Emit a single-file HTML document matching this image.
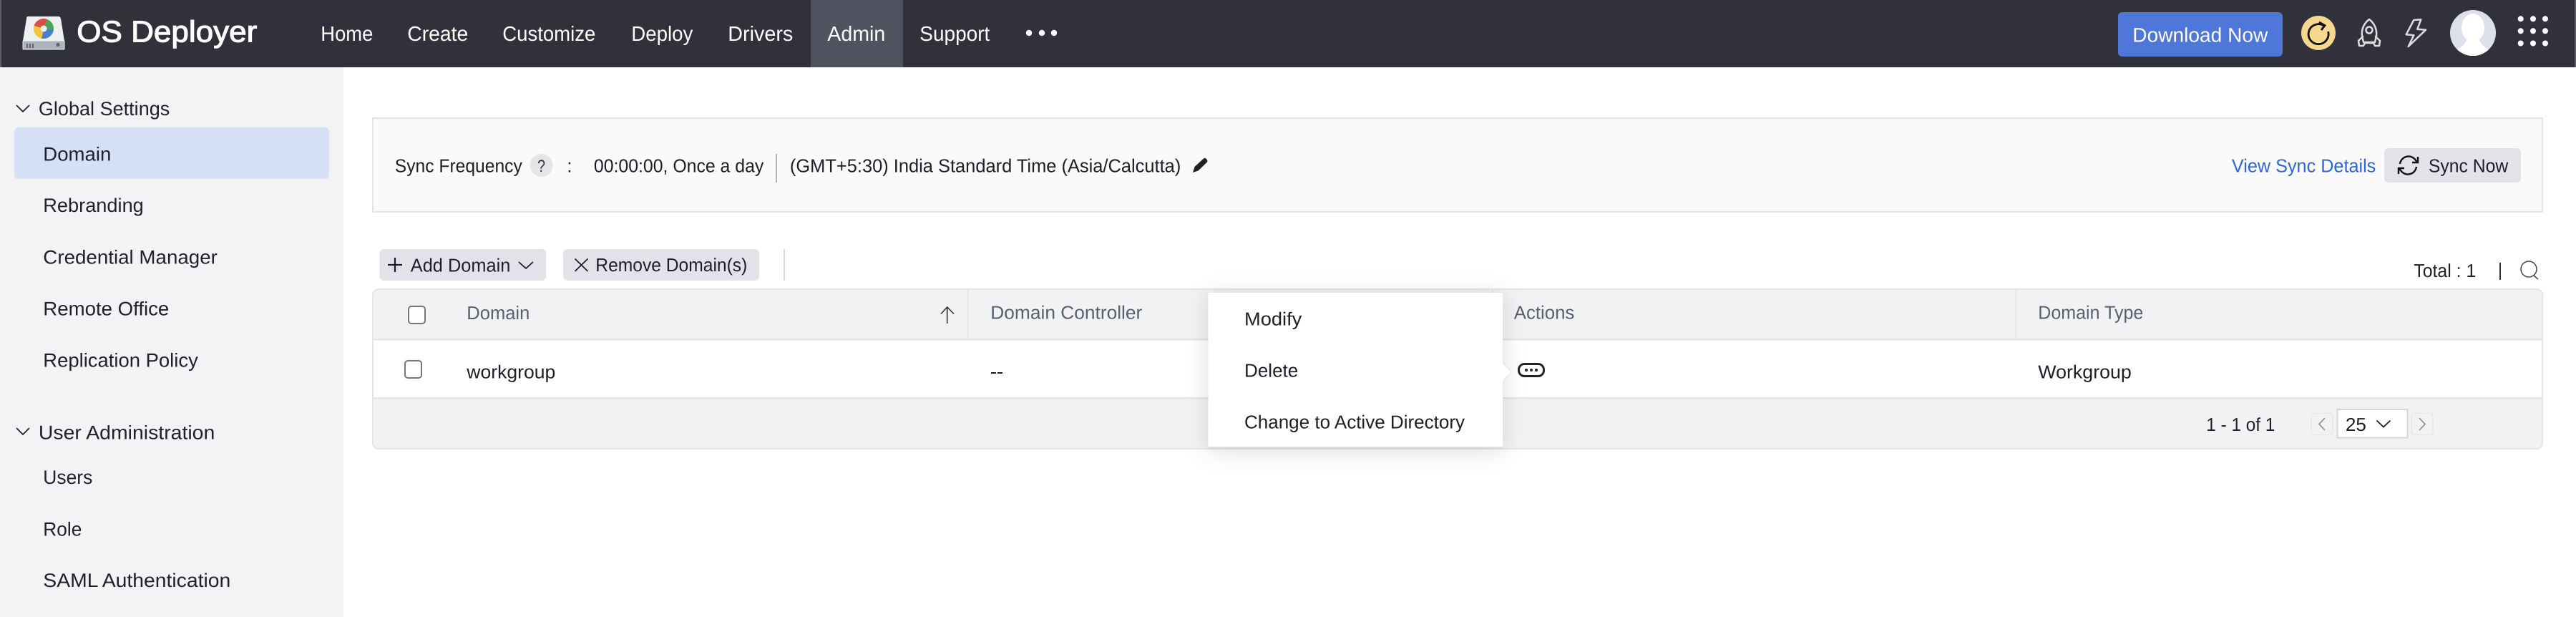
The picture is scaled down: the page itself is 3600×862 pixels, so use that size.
<!DOCTYPE html>
<html lang="en"><head><meta charset="utf-8"><title>OS Deployer</title>
<style>
html,body{margin:0;padding:0;background:#fff;width:3600px;height:862px;overflow:hidden}
svg{display:block}
text{font-family:"Liberation Sans",Arial,sans-serif;fill:#1d1e26;font-size:26px;text-rendering:geometricPrecision;transform:translateX(-.7px)}
.nav{fill:#fff;font-size:29px}
.side{font-size:27px;fill:#20212a}
.th{fill:#5b5e6e}
</style></head><body>
<svg xmlns="http://www.w3.org/2000/svg" width="3600" height="862" viewBox="0 0 3600 862">
<defs>
<filter id="sh" x="-20%" y="-25%" width="140%" height="150%"><feDropShadow dx="0" dy="4" stdDeviation="16" flood-color="#000" flood-opacity=".14"/></filter>
<clipPath id="tb"><rect x="520" y="403" width="3034" height="225" rx="9"/></clipPath>
<clipPath id="av"><circle cx="3456" cy="46" r="32"/></clipPath>
</defs>
<rect width="3600" height="862" fill="#fff"/>
<!-- header -->
<rect width="3600" height="94" fill="#31313b"/>
<rect width="2" height="94" fill="#5b5c66"/><rect x="3598" width="2" height="94" fill="#5b5c66"/>
<rect x="1133" width="129" height="94" fill="#50535f"/>
<!-- logo -->
<path d="M39 23H82Q84 23 85 26L90 57H32L37 26Q37 23 39 23Z" fill="#eef0f1"/>
<rect x="32" y="57" width="58" height="12" rx="1" fill="#adb3bb" stroke="#eef0f1" stroke-width="1"/>
<path d="M38 61v6M42 61v6M46 61v6" stroke="#5d6570" stroke-width="2"/><circle cx="81" cy="62.500" r="2.600" fill="#5d6570"/>
<path d="M61 40L47.500 36A14 14 0 0 1 66 27Z" fill="#d9503f"/>
<path d="M61 40L66 27A14 14 0 0 1 75 41Z" fill="#4ba55a"/>
<path d="M61 40L75 41A14 14 0 0 1 58 53.700Z" fill="#4a7fcb"/>
<path d="M61 40L58 53.700A14 14 0 0 1 47.500 36Z" fill="#f4c53d"/>
<circle cx="61" cy="40" r="4.500" fill="#eef0f1"/>
<text x="108" y="58.500" class="nav" style="font-size:42px;stroke:#fff;stroke-width:1.100" textLength="252" lengthAdjust="spacingAndGlyphs">OS Deployer</text>
<text x="449" y="57" class="nav" textLength="73" lengthAdjust="spacingAndGlyphs">Home</text>
<text x="570" y="57" class="nav" textLength="85" lengthAdjust="spacingAndGlyphs">Create</text>
<text x="703" y="57" class="nav" textLength="130" lengthAdjust="spacingAndGlyphs">Customize</text>
<text x="883" y="57" class="nav" textLength="86" lengthAdjust="spacingAndGlyphs">Deploy</text>
<text x="1018" y="57" class="nav" textLength="91" lengthAdjust="spacingAndGlyphs">Drivers</text>
<text x="1157" y="57" class="nav" textLength="81" lengthAdjust="spacingAndGlyphs">Admin</text>
<text x="1286" y="57" class="nav" textLength="98" lengthAdjust="spacingAndGlyphs">Support</text>
<g fill="#fff"><circle cx="1438" cy="46" r="4.200"/><circle cx="1456" cy="46" r="4.200"/><circle cx="1473" cy="46" r="4.200"/></g>
<rect x="2960" y="17" width="230" height="62" rx="6" fill="#4f77d9"/>
<text x="2981" y="58.500" class="nav" style="font-size:28px" textLength="189" lengthAdjust="spacingAndGlyphs">Download Now</text>
<circle cx="3240" cy="46" r="24" fill="#f5d78e"/>
<path d="M3247 35.500A14 14 0 1 0 3253.600 44" fill="none" stroke="#111" stroke-width="2.800"/>
<path d="M3241 31L3249 35.500L3244 42" fill="none" stroke="#111" stroke-width="2.800"/>
<g fill="none" stroke="#dcdde1" stroke-width="2.500" stroke-linejoin="round" stroke-linecap="round">
<path d="M3311 27C3303 33 3300 42 3301 50L3303 59H3319L3321 50C3322 42 3319 33 3311 27Z"/>
<circle cx="3311" cy="42" r="4.500"/>
<path d="M3302 51L3296 57L3297 64H3303L3305 60H3317L3319 64H3325L3326 57L3320 51"/>
<path d="M3383.300 27.300L3373.300 28L3362.700 48.300L3373.300 49.300L3365.700 65L3390 41.700L3378.300 40.700Z"/>
</g>
<circle cx="3456" cy="46" r="32" fill="#dde0e9"/>
<g clip-path="url(#av)" fill="#fff"><ellipse cx="3456" cy="39" rx="16" ry="20"/><path d="M3420 82C3428 68 3446 68 3448 52H3464C3466 68 3484 68 3492 82Z"/></g>
<g fill="#fff"><circle cx="3522.700" cy="26.300" r="4"/><circle cx="3540" cy="26.300" r="4"/><circle cx="3557" cy="26.300" r="4"/><circle cx="3522.700" cy="43.300" r="4"/><circle cx="3540" cy="43.300" r="4"/><circle cx="3557" cy="43.300" r="4"/><circle cx="3522.700" cy="60.500" r="4"/><circle cx="3540" cy="60.500" r="4"/><circle cx="3557" cy="60.500" r="4"/></g>
<!-- sidebar -->
<rect y="94" width="480" height="768" fill="#f2f3f5"/>
<rect x="20" y="178" width="440" height="72" rx="6" fill="#d5dff6"/>
<path d="M23 147L32 156L41 147M23 598L32 607L41 598" fill="none" stroke="#22232b" stroke-width="1.800"/>
<text x="54.600" y="161" class="side" textLength="183.400" lengthAdjust="spacingAndGlyphs">Global Settings</text>
<text x="61" y="224.500" class="side" textLength="95" lengthAdjust="spacingAndGlyphs">Domain</text>
<text x="61" y="296" class="side" textLength="140.500" lengthAdjust="spacingAndGlyphs">Rebranding</text>
<text x="61" y="368.500" class="side" textLength="243.600" lengthAdjust="spacingAndGlyphs">Credential Manager</text>
<text x="61" y="440.500" class="side" textLength="176" lengthAdjust="spacingAndGlyphs">Remote Office</text>
<text x="61" y="512.500" class="side" textLength="216.500" lengthAdjust="spacingAndGlyphs">Replication Policy</text>
<text x="54.600" y="613.500" class="side" textLength="246.400" lengthAdjust="spacingAndGlyphs">User Administration</text>
<text x="61" y="676" class="side" textLength="69" lengthAdjust="spacingAndGlyphs">Users</text>
<text x="61" y="748.500" class="side" textLength="54" lengthAdjust="spacingAndGlyphs">Role</text>
<text x="61" y="820" class="side" textLength="262" lengthAdjust="spacingAndGlyphs">SAML Authentication</text>
<!-- sync panel -->
<rect x="521" y="165" width="3032" height="131" fill="#fafafa" stroke="#e4e5ea" stroke-width="2"/>
<text x="552.500" y="240.500" textLength="178" lengthAdjust="spacingAndGlyphs">Sync Frequency</text>
<circle cx="756.600" cy="231" r="16" fill="#e4e5e9"/>
<text x="751.700" y="240" style="font-size:24px;fill:#333" textLength="11" lengthAdjust="spacingAndGlyphs">?</text>
<text x="793" y="240.500">:</text>
<text x="830.600" y="240.500" textLength="237.400" lengthAdjust="spacingAndGlyphs">00:00:00, Once a day</text>
<rect x="1084" y="215" width="2" height="40" fill="#b4b4ac"/>
<text x="1104.600" y="240.500" textLength="546.400" lengthAdjust="spacingAndGlyphs">(GMT+5:30) India Standard Time (Asia/Calcutta)</text>
<path d="M1667 241L1669.500 233L1682 221.500Q1684 220 1686 222L1687 223.500Q1688 225.500 1686.500 227L1674.500 238.500Z" fill="#222"/>
<text x="3119.600" y="240.500" style="fill:#2a66dc" textLength="201.400" lengthAdjust="spacingAndGlyphs">View Sync Details</text>
<rect x="3332" y="207" width="191" height="48" rx="6" fill="#e2e3e8"/>
<g fill="none" stroke="#111" stroke-width="2.400"><path d="M3354 229A12 12 0 0 1 3376 224L3378 226"/><path d="M3379 219V227H3371"/><path d="M3377 233A12 12 0 0 1 3355 238L3353 236"/><path d="M3352 243V235H3360"/></g>
<text x="3394.600" y="240.500" textLength="111.400" lengthAdjust="spacingAndGlyphs">Sync Now</text>
<!-- toolbar -->
<rect x="530.600" y="348" width="232.400" height="44" rx="6" fill="#e2e3e8"/>
<path d="M542 370H562M552 360V380" stroke="#1d1e26" stroke-width="2.200"/>
<text x="574.500" y="379.500" textLength="139.500" lengthAdjust="spacingAndGlyphs">Add Domain</text>
<path d="M725 366L735 375L745 366" fill="none" stroke="#1d1e26" stroke-width="1.800"/>
<rect x="787" y="348" width="274" height="44" rx="6" fill="#e2e3e8"/>
<path d="M803.500 361.500L821.500 379M821.500 361.500L803.500 379" stroke="#1d1e26" stroke-width="1.800"/>
<text x="833" y="379" textLength="212" lengthAdjust="spacingAndGlyphs">Remove Domain(s)</text>
<rect x="1095" y="348" width="2" height="44" fill="#d8d8da"/>
<text x="3374" y="387" textLength="87" lengthAdjust="spacingAndGlyphs">Total : 1</text>
<rect x="3493" y="367" width="2" height="24" fill="#333"/>
<circle cx="3534" cy="376" r="11" fill="none" stroke="#444" stroke-width="1.500"/><path d="M3541 385L3547 390" stroke="#444" stroke-width="1.500"/>
<!-- table -->
<g clip-path="url(#tb)">
<rect x="520" y="403" width="3034" height="71" fill="#f1f2f4"/>
<rect x="520" y="474" width="3034" height="82" fill="#fff"/>
<rect x="520" y="556" width="3034" height="72" fill="#f1f2f4"/>
<rect x="520" y="473" width="3034" height="2.400" fill="#e4e5ea"/>
<rect x="520" y="555" width="3034" height="2.400" fill="#e4e5ea"/>
<rect x="1352" y="404" width="2" height="70" fill="#e4e5ea"/>
<rect x="2084.500" y="404" width="2" height="70" fill="#e4e5ea"/>
<rect x="2816.500" y="404" width="2" height="70" fill="#e4e5ea"/>
</g>
<rect x="521" y="404" width="3032" height="223" rx="8" fill="none" stroke="#e4e5ea" stroke-width="2"/>
<rect x="571" y="428" width="23" height="24" rx="4" fill="#fff" stroke="#767676" stroke-width="2"/>
<rect x="566" y="504" width="23" height="24" rx="4" fill="#fff" stroke="#767676" stroke-width="2"/>
<text x="653" y="446" class="th" textLength="88" lengthAdjust="spacingAndGlyphs">Domain</text>
<path d="M1323.700 429V452M1315 438.500L1323.700 429L1333 438.500" fill="none" stroke="#333" stroke-width="1.600"/>
<text x="1385" y="445.700" class="th" textLength="212" lengthAdjust="spacingAndGlyphs">Domain Controller</text>
<text x="2116.500" y="445.700" class="th" textLength="84.500" lengthAdjust="spacingAndGlyphs">Actions</text>
<text x="2849" y="445.700" class="th" textLength="147" lengthAdjust="spacingAndGlyphs">Domain Type</text>
<text x="653" y="528.500" textLength="124" lengthAdjust="spacingAndGlyphs">workgroup</text>
<rect x="1385" y="520" width="7" height="2" fill="#1d1e26"/><rect x="1394" y="520" width="7" height="2" fill="#1d1e26"/>
<text x="2849" y="528.500" textLength="130.500" lengthAdjust="spacingAndGlyphs">Workgroup</text>
<rect x="2122.500" y="508.500" width="35" height="17" rx="8" fill="#fff" stroke="#22232b" stroke-width="3"/>
<g fill="#22232b"><circle cx="2133" cy="517" r="2"/><circle cx="2140" cy="517" r="2"/><circle cx="2147" cy="517" r="2"/></g>
<text x="3084" y="602" textLength="96" lengthAdjust="spacingAndGlyphs">1 - 1 of 1</text>
<rect x="3230" y="577.500" width="30" height="30" rx="4" fill="#f1f2f4" stroke="#e6e7ea" stroke-width="1.500"/>
<path d="M3249 584L3241 592.500L3249 601" fill="none" stroke="#8a8b92" stroke-width="1.600"/>
<rect x="3266.500" y="572" width="98" height="39.500" fill="#fff" stroke="#d4d5d9" stroke-width="2"/>
<text x="3278.600" y="602" textLength="29" lengthAdjust="spacingAndGlyphs">25</text>
<path d="M3321.500 587.500L3331 596.500L3340.500 587.500" fill="none" stroke="#1d1e26" stroke-width="1.800"/>
<rect x="3370" y="577.500" width="30" height="30" rx="4" fill="#f1f2f4" stroke="#e6e7ea" stroke-width="1.500"/>
<path d="M3381 584L3389 592.500L3381 601" fill="none" stroke="#8a8b92" stroke-width="1.600"/>
<!-- popup -->
<rect x="1688.500" y="409" width="411.500" height="216" fill="#fff" filter="url(#sh)"/>
<rect x="1688.500" y="624" width="411.500" height="2" fill="#dedfe3"/>
<path d="M2100 507L2112.500 520L2100 532" fill="#fff" stroke="#e6e7ea" stroke-width="1.200"/>
<rect x="2097" y="506" width="3.500" height="27" fill="#fff"/>
<text x="1739.700" y="454.700" textLength="80.300" lengthAdjust="spacingAndGlyphs">Modify</text>
<text x="1739.700" y="526.700" textLength="75.300" lengthAdjust="spacingAndGlyphs">Delete</text>
<text x="1739.700" y="598.500" textLength="308" lengthAdjust="spacingAndGlyphs">Change to Active Directory</text>
</svg>
</body></html>
